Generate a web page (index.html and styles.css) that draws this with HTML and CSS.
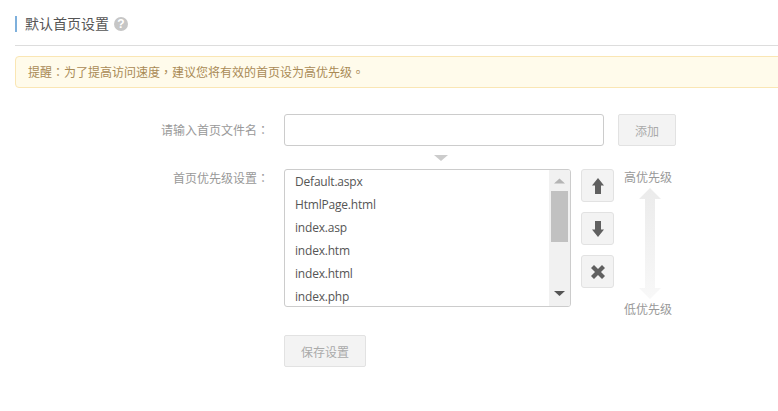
FILE: index.html
```html
<!DOCTYPE html>
<html lang="zh-CN">
<head>
<meta charset="utf-8">
<title>默认首页设置</title>
<link rel="stylesheet" href="styles.css">
</head>
<body>
<div class="page">
  <header class="head">
    <h1 class="title">默认首页设置</h1>
    <span class="help">?</span>
  </header>
  <div class="notice">提醒<span class="punct" lang="zh-TW">：</span>为了提高访问速度<span class="punct" lang="zh-TW">，</span>建议您将有效的首页设为高优先级<span class="punct" lang="zh-TW">。</span></div>
  <div class="form">
    <div class="row row-input">
      <label class="label label-input">请输入首页文件名<span class="punct" lang="zh-TW">：</span></label>
      <input class="text" type="text">
      <button class="btn add">添加</button>
    </div>
    <div class="tri"></div>
    <div class="row row-list">
      <label class="label">首页优先级设置<span class="punct" lang="zh-TW">：</span></label>
      <div class="list">
        <ul class="items">
          <li>Default.aspx</li>
          <li>HtmlPage.html</li>
          <li>index.asp</li>
          <li>index.htm</li>
          <li>index.html</li>
          <li>index.php</li>
        </ul>
        <div class="sb">
          <svg class="sb-a" width="21" height="21" viewBox="0 0 21 21"><path d="M5 13.500 10.500 8.500 16 13.500z" fill="#b4b4b4"/></svg>
          <div class="thumb"></div>
          <svg class="sb-b" width="21" height="22" viewBox="0 0 21 22"><path d="M5 8 16 8 10.500 13z" fill="#555"/></svg>
        </div>
      </div>
      <div class="tools">
        <button class="tool"><svg width="14" height="18" viewBox="0 0 14 18"><path d="M7 1 13 8.500H10V17H4V8.500H1z" fill="#606060"/></svg></button>
        <button class="tool"><svg width="14" height="18" viewBox="0 0 14 18"><path d="M7 17 13 9.500H10V1H4V9.500H1z" fill="#606060"/></svg></button>
        <button class="tool"><svg width="16" height="16" viewBox="0 0 16 16"><path d="M4 1 8 5 12 1 15 4 11 8 15 12 12 15 8 11 4 15 1 12 5 8 1 4z" fill="#606060"/></svg></button>
      </div>
      <div class="prio">
        <span>高优先级</span>
        <svg class="prio-arrow" width="22" height="112" viewBox="0 0 22 112">
          <defs><linearGradient id="fade" x1="0" y1="0" x2="0" y2="1"><stop offset="0" stop-color="#ebebeb"/><stop offset="1" stop-color="#f8f8f8"/></linearGradient></defs>
          <path d="M11 0 22 11H16V100H22L11 111 0 100H6V11H0z" fill="url(#fade)"/>
        </svg>
        <span>低优先级</span>
      </div>
    </div>
    <button class="btn save">保存设置</button>
  </div>
</div>
</body>
</html>
```
FILE: styles.css
```css
* { box-sizing: border-box; }
html, body { margin: 0; padding: 0; background: #fff; overflow: hidden; }
body { font-family: "Liberation Sans", "Noto Sans CJK SC", sans-serif; font-size: 12px; color: #555; }
.page { height: 411px; padding: 16px 0 0 15px; }
.punct { font-family: "Noto Sans CJK TC", sans-serif; }
.head { display: flex; align-items: center; height: 30px; padding-bottom: 13px; border-bottom: 1px solid #ddd; }
.title { margin: 0; padding-left: 8px; border-left: 2px solid #7eb0dc; font-size: 14px; font-weight: normal; line-height: 16px; color: #555; }
.help { width: 14px; height: 14px; margin-left: 5px; border-radius: 50%; background: #c6c6c6; color: #fff; font-size: 12px; font-weight: bold; line-height: 14px; text-align: center; }
.notice { height: 32px; margin-top: 10px; margin-right: -4px; padding-left: 12px; border: 1px solid #fae6b4; border-radius: 4px; background: #fffbeb; color: #a98a55; line-height: 30px; }
.form { padding-top: 26px; }
.row { display: flex; align-items: flex-start; }
.row-input { height: 32px; }
.label { width: 269px; margin-left: -15px; text-align: right; color: #999; line-height: 18px; margin-right: 15px; flex: none; white-space: nowrap; }
.label-input { line-height: 32px; }
.text { width: 320px; height: 32px; border: 1px solid #ccc; border-radius: 3px; background: #fff; padding: 0 8px; }
.btn { height: 32px; border: 1px solid #e2e2e2; border-radius: 2px; background: #f3f3f3; color: #aaa; font: inherit; padding: 0; }
.add { width: 58px; margin-left: 14px; }
.tri { width: 0; height: 0; margin: 9px 0 8px 419px; border-style: solid; border-width: 6px 7.500px 0; border-color: #ccc transparent transparent; }
.row-list { height: 138px; }
.list { display: flex; width: 287px; height: 138px; border: 1px solid #ccc; border-radius: 3px; overflow: hidden; flex: none; }
.items { flex: 1; margin: 0; padding: 0 0 0 10px; list-style: none; font-family: "Open Sans", "Liberation Sans", sans-serif; letter-spacing: -0.2px; overflow: hidden; color: #555; }
.items li { height: 23px; line-height: 23px; }
.sb { display: flex; flex-direction: column; width: 21px; background: #f1f1f1; align-items: center; }
.sb-a, .sb-b { flex: none; }
.sb-b { margin-top: auto; margin-bottom: 1px; }
.thumb { width: 17px; height: 51px; background: #c1c1c1; }
.tools { display: flex; flex-direction: column; gap: 10px; margin-left: 10px; }
.tool { display: flex; align-items: center; justify-content: center; width: 33px; height: 33px; border: 1px solid #e2e2e2; border-radius: 3px; background: #f3f3f3; padding: 0; }
.prio { display: flex; flex-direction: column; align-items: center; width: 48px; margin-left: 10px; color: #999; line-height: 18px; }
.prio-arrow { margin: 1px 0 1px 3px; flex: none; }
.prio span { flex: none; }
.save { display: block; width: 82px; margin: 28px 0 0 269px; }
```
